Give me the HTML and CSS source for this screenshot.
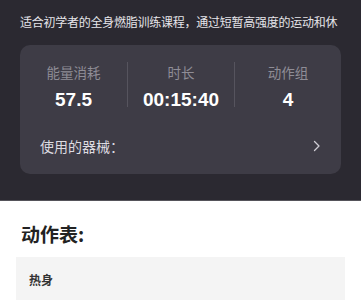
FILE: index.html
```html
<!DOCTYPE html>
<html lang="zh">
<head>
<meta charset="utf-8">
<link rel="stylesheet" href="styles.css">
</head>
<body>
<section class="hero">
  <p class="desc">适合初学者的全身燃脂训练课程，通过短暂高强度的运动和休</p>
  <div class="card">
    <div class="stats">
      <div class="stat">
        <div class="label">能量消耗</div>
        <div class="value">57.5</div>
      </div>
      <div class="stat">
        <div class="label">时长</div>
        <div class="value">00:15:40</div>
      </div>
      <div class="stat">
        <div class="label">动作组</div>
        <div class="value">4</div>
      </div>
    </div>
    <div class="equip">
      <span>使用的器械：</span>
      <svg class="chev" width="8" height="12" viewBox="0 0 8 12"><path d="M1.5 1.5 L6 6 L1.5 10.5" fill="none" stroke="#cfcdd4" stroke-width="1.3" stroke-linecap="round" stroke-linejoin="round"/></svg>
    </div>
  </div>
</section>
<section class="list">
  <h2 class="title">动作表:</h2>
  <div class="group">热身</div>
</section>
</body>
</html>
```
FILE: styles.css
```css
* { box-sizing: border-box; }
html, body { margin: 0; padding: 0; }
body {
  width: 361px;
  height: 301px;
  overflow: hidden;
  background: #ffffff;
  font-family: "Noto Sans CJK SC", "Liberation Sans", sans-serif;
}
.hero {
  background: #2b2931;
  height: 201px;
  padding: 13px 20px 0 20px;
  border-bottom: 1px solid #55545a;
}
.desc {
  margin: 0;
  color: #e6e5ea;
  font-size: 12px;
  line-height: 17px;
  white-space: nowrap;
  letter-spacing: -0.25px;
}
.card {
  margin-top: 15px;
  height: 129px;
  background: #3e3c46;
  border-radius: 10px;
  padding-top: 17px;
}
.stats {
  display: grid;
  grid-template-columns: 1fr 1fr 1fr;
}
.stat {
  display: flex;
  flex-direction: column;
  align-items: center;
  border-left: 1px solid #56545e;
  height: 45px;
}
.stat:first-child { border-left: none; }
.label {
  color: #8f8d96;
  font-size: 13.5px;
  line-height: 20px;
}
.value {
  margin-top: 8px;
  color: #ffffff;
  font-family: "Liberation Sans", sans-serif;
  font-weight: 700;
  font-size: 19px;
  line-height: 20px;
}
.equip {
  display: flex;
  align-items: center;
  justify-content: space-between;
  margin-top: 29px;
  padding: 0 20px;
  color: #dddbe1;
  font-size: 14px;
  line-height: 20px;
}
.chev { display: block; }
.list {
  padding: 0 16px;
}
.title {
  margin: 0;
  padding: 20px 0 0 5px;
  font-size: 19px;
  line-height: 25px;
  font-weight: 700;
  color: #222222;
}
.group {
  margin-top: 11px;
  background: #f4f4f4;
  height: 43px;
  padding: 14px 0 0 13px;
  font-size: 12px;
  line-height: 18px;
  font-weight: 700;
  color: #333333;
}
```
